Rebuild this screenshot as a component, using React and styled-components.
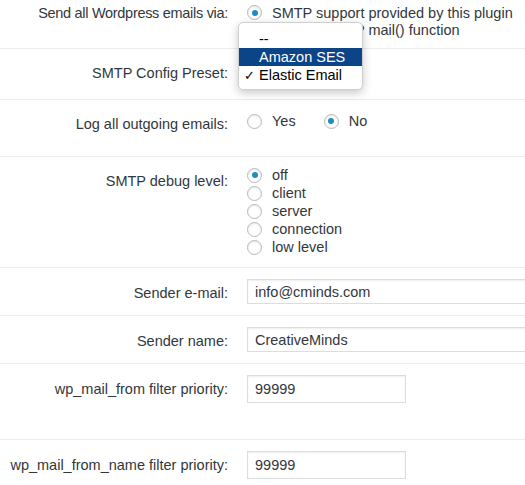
import React from 'react';
import styled, { createGlobalStyle } from 'styled-components';

const Global = createGlobalStyle`
  html, body {
    margin: 0;
    padding: 0;
    background: #fff;
  }
  body {
    font-family: "Liberation Sans", Arial, sans-serif;
    font-size: 14.5px;
    color: #32373c;
    overflow: hidden;
  }
`;

const Page = styled.div`
  position: relative;
  width: 525px;
  height: 485px;
  overflow: hidden;
`;

const Row = styled.div`
  display: flex;
  height: ${(p) => p.$h}px;
  border-bottom: 1px solid ${(p) => (p.$last ? 'transparent' : '#ececec')};
  box-sizing: border-box;
`;

const Label = styled.div`
  width: 228px;
  flex: none;
  text-align: right;
  padding-top: ${(p) => p.$pt}px;
  line-height: 18px;
  white-space: nowrap;
  letter-spacing: ${(p) => p.$tight ? '-0.3px' : 'normal'};
`;

const Field = styled.div`
  flex: 1;
  margin-left: 19px;
  padding-top: ${(p) => p.$pt}px;
  white-space: nowrap;
`;

const Stack = styled.div`
  display: flex;
  flex-direction: column;
`;

const Inline = styled.div`
  display: flex;
  gap: 28px;
`;

const Option = styled.label`
  display: flex;
  align-items: center;
  height: ${(p) => p.$lh || 18}px;
  line-height: 18px;
  gap: 10px;
`;

const Radio = styled.span`
  width: 15px;
  height: 15px;
  flex: none;
  box-sizing: border-box;
  border-radius: 50%;
  border: 1px solid #b4b9be;
  background: #fff;
  box-shadow: inset 0 1px 2px rgba(0, 0, 0, 0.1);
  display: flex;
  align-items: center;
  justify-content: center;
  &::after {
    content: '';
    width: 6px;
    height: 6px;
    border-radius: 50%;
    background: ${(p) => (p.$on ? '#1e8cbe' : 'transparent')};
  }
`;

const Input = styled.div`
  box-sizing: border-box;
  width: ${(p) => p.$w};
  height: ${(p) => p.$h}px;
  border: 1px solid #ddd;
  box-shadow: inset 0 1px 2px rgba(0, 0, 0, 0.07);
  padding: 0 7px;
  display: flex;
  align-items: center;
  color: #32373c;
`;

const Menu = styled.div`
  position: absolute;
  left: 238px;
  top: 22px;
  width: 125px;
  box-sizing: border-box;
  padding: 7px 0 5px;
  background: #fff;
  border: 1px solid #cfcfcf;
  border-radius: 5px;
  box-shadow: 0 3px 10px rgba(0, 0, 0, 0.22);
  color: #000;
`;

const MenuItem = styled.div`
  display: flex;
  align-items: center;
  height: 18px;
  padding-left: 20px;
  position: relative;
  background: ${(p) => (p.$active ? '#0b4487' : 'transparent')};
  color: ${(p) => (p.$active ? '#fff' : '#000')};
`;

const Check = styled.span`
  position: absolute;
  left: 5px;
  font-size: 13px;
`;

const Radios = ({ items, selected, lh }) => (
  <Stack>
    {items.map((t) => (
      <Option key={t} $lh={lh}>
        <Radio $on={t === selected} />
        {t}
      </Option>
    ))}
  </Stack>
);

export default function App() {
  return (
    <Page>
      <Global />
      <Row $h={49}>
        <Label $pt={4} $tight>Send all Wordpress emails via:</Label>
        <Field $pt={4}>
          <Radios
            lh={17}
            items={['SMTP support provided by this plugin', 'Standard PHP mail() function']}
            selected="SMTP support provided by this plugin"
          />
        </Field>
      </Row>
      <Row $h={51}>
        <Label $pt={15}>SMTP Config Preset:</Label>
        <Field $pt={15} />
      </Row>
      <Row $h={57}>
        <Label $pt={15}>Log all outgoing emails:</Label>
        <Field $pt={12}>
          <Inline>
            <Option>
              <Radio />
              Yes
            </Option>
            <Option>
              <Radio $on />
              No
            </Option>
          </Inline>
        </Field>
      </Row>
      <Row $h={111}>
        <Label $pt={15}>SMTP debug level:</Label>
        <Field $pt={9}>
          <Radios items={['off', 'client', 'server', 'connection', 'low level']} selected="off" />
        </Field>
      </Row>
      <Row $h={48}>
        <Label $pt={16}>Sender e-mail:</Label>
        <Field $pt={11}>
          <Input $w="300px" $h={25}>info@cminds.com</Input>
        </Field>
      </Row>
      <Row $h={48}>
        <Label $pt={16}>Sender name:</Label>
        <Field $pt={11}>
          <Input $w="300px" $h={25}>CreativeMinds</Input>
        </Field>
      </Row>
      <Row $h={76}>
        <Label $pt={16}>wp_mail_from filter priority:</Label>
        <Field $pt={11}>
          <Input $w="159px" $h={28}>99999</Input>
        </Field>
      </Row>
      <Row $h={60} $last>
        <Label $pt={16}>wp_mail_from_name filter priority:</Label>
        <Field $pt={11}>
          <Input $w="159px" $h={28}>99999</Input>
        </Field>
      </Row>
      <Menu>
        <MenuItem>--</MenuItem>
        <MenuItem $active>Amazon SES</MenuItem>
        <MenuItem>
          <Check>✓</Check>
          Elastic Email
        </MenuItem>
      </Menu>
    </Page>
  );
}
